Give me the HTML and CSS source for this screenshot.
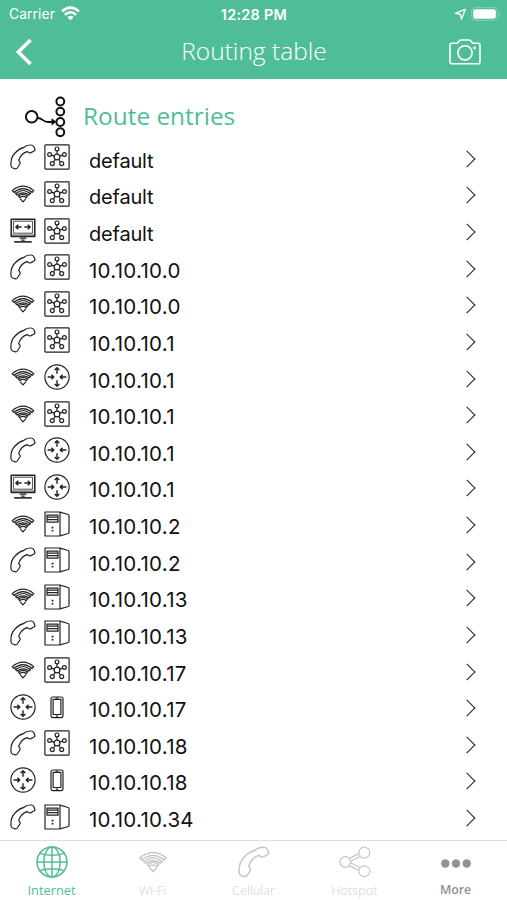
FILE: index.html
```html
<!DOCTYPE html>
<html lang="en">
<head>
<meta charset="utf-8">
<title>Routing table</title>
<link rel="stylesheet" href="styles.css">
</head>
<body>
<svg class="defs" width="0" height="0" aria-hidden="true">
  <symbol id="phone" viewBox="0 0 26 26"><path d="M1 21.5Q.3 14 5 9Q9 4.6 14 3.4L15.5 2.2Q17 1.2 20.5 1Q22.8.9 23.6 2.3L24.8 5Q25.3 6.2 24 7L21 8.6Q19.5 9.3 18.6 8.6L17 7.6Q11 9.5 8.7 16.4L10 18.3Q10.4 19 9.9 20L7.3 24Q6.6 25 5.5 24.8L2.6 24Q1 23.3 1 21.5Z"/></symbol>
  <symbol id="wifi" viewBox="0 0 26 26"><path d="M2.2 9.6Q13 .8 23.8 9.6L22.2 11.3Q13 4 3.8 11.3ZM5.4 11.4Q5 11.9 5.6 12.5L6.9 13.9Q13 9.7 19.1 13.9L20.4 12.5Q21 11.9 20.6 11.4M8.4 14.2Q8.2 14.8 8.6 15.3L9.8 16.6Q13 14.2 16.2 16.6L17.4 15.3Q17.8 14.8 17.6 14.2M10.4 17.3Q10.3 18 10.9 18.6L13 20.8 15.1 18.6Q15.7 18 15.6 17.3M6.2 12.2Q13 6.8 19.8 12.2M8.9 14.7Q13 11.9 17.1 14.7"/></symbol>
  <symbol id="net" viewBox="0 0 26 26"><rect x=".9" y=".9" width="24.2" height="24.2" rx=".7"/><circle cx="13" cy="13" r="2.9"/><circle cx="13" cy="4.9" r="1.9"/><circle cx="5.6" cy="10.5" r="1.9"/><circle cx="20.4" cy="10.5" r="1.9"/><circle cx="8.3" cy="19.6" r="2"/><circle cx="17.7" cy="19.6" r="2"/><path d="M13 6.8V10M7.4 11.1 10.2 12.1M18.6 11.1 15.8 12.1M9.5 18 11.3 15.4M16.5 18 14.7 15.4"/></symbol>
  <symbol id="router" viewBox="0 0 26 26"><circle cx="13" cy="13" r="12.1"/><path d="M13 9.8V4M10.7 6.1 13 3.7 15.3 6.1M13 16.2V22M10.7 19.9 13 22.3 15.3 19.9M3.6 13H9.8M7.4 10.7 9.8 13 7.4 15.3M22.4 13H16.2M18.6 10.7 16.2 13 18.6 15.3" stroke-width="1.4"/></symbol>
  <symbol id="monitor" viewBox="0 0 26 26"><path d="M1.2 1.2H24.8V18.4H1.2Z" stroke-width="1.5"/><path d="M3.4 3.2H22.6V15.2H3.4ZM1.4 17H24.6" stroke-width=".8"/><path d="M11.6 9H5.8M8.3 6.7 5.8 9 8.3 11.3M14.4 9H20.2M17.7 6.7 20.2 9 17.7 11.3" stroke-width="1.4"/><path d="M9.6 20.1H16.4M11.3 22.2H14.7" stroke-width="1.3"/><path d="M4.2 23.9H21.8" stroke-width="1.6"/></symbol>
  <symbol id="server" viewBox="0 0 26 26"><path d="M1 1H16V25H1ZM16 1.2 24.2 3.5Q25 3.8 25 4.6V21.4Q25 22.2 24.2 22.5L16 24.8M3 4.2H14V8.6H3ZM3 8.8V11.2H14V8.8M3 6.1H14"/><path d="M8.5 15.8V17.4M8.5 19V20.6" stroke-width="1.8"/></symbol>
  <symbol id="mobile" viewBox="0 0 26 26"><rect x="7" y="3" width="12" height="20.6" rx="2"/><path d="M9.1 5.3H16.9V20.5H9.1ZM11.6 4H14.4M11.8 22.1H14.2"/></symbol>
</svg>
<div class="app">
  <header class="top">
    <div class="status">
      <div class="carrier"><span>Carrier</span>
        <svg width="19" height="15" viewBox="0 0 19 15" fill="none" stroke="#fff" stroke-width="2.5"><path d="M1 5.4Q9.5-2.1 18 5.4M3.9 8.8Q9.5 3.8 15.1 8.8"/><path d="M6.4 11.2Q9.5 8.4 12.6 11.2L9.5 14.3Z" fill="#fff" stroke="none"/></svg>
      </div>
      <div class="time">12:28 PM</div>
      <div class="indicators">
        <svg width="13" height="13" viewBox="0 0 13 13" fill="none" stroke="#fff" stroke-width="1.3" stroke-linejoin="round"><path d="M1.3 5.4 11.3 1.4 7.4 11.2 6.4 6.4Z"/></svg>
        <svg width="30" height="14" viewBox="0 0 30 14"><rect x=".6" y=".6" width="25.8" height="12.8" rx="4" fill="none" stroke="#85d0b6"/><rect x="2.2" y="2.2" width="22.6" height="9.6" rx="2.3" fill="#fff"/><path d="M28 4.8Q30 7 28 9.2Z" fill="#85d0b6"/></svg>
      </div>
    </div>
    <div class="nav">
      <svg class="back" width="18" height="28" viewBox="0 0 18 28" fill="none" stroke="#fff" stroke-width="3.6"><path d="M15.5 2 3.4 14 15.5 26"/></svg>
      <h1>Routing table</h1>
      <svg class="camera" width="32" height="26" viewBox="0 0 32 26" fill="none" stroke="#fff" stroke-width="1.6" stroke-linejoin="round"><path d="M3 4.3H8.2L10.4 1.7Q11 1 12 1H20Q21 1 21.6 1.7L23.8 4.3H29Q31 4.3 31 6.3V22.7Q31 24.7 29 24.7H3Q1 24.7 1 22.7V6.3Q1 4.3 3 4.3Z"/><circle cx="16" cy="13.8" r="7.1"/><circle cx="25.5" cy="8.9" r="1.3" fill="#fff" stroke="none"/></svg>
    </div>
  </header>
  <main>
    <div class="section">
      <svg width="42" height="42" viewBox="0 0 42 42" fill="none" stroke="#111" stroke-width="2"><circle cx="7.7" cy="21.8" r="5.8"/><circle cx="36.3" cy="6.5" r="3.9"/><circle cx="36.3" cy="16.6" r="3.9"/><circle cx="36.3" cy="27" r="3.9"/><circle cx="36.3" cy="37.2" r="3.9"/><path d="M13.5 23C18.5 22.6 18.5 27 24 27H29" stroke-width="1.8"/><path d="M27.5 23.2 32.5 26.8 27.5 30.4Z" fill="#111" stroke="none"/></svg>
      <h2>Route entries</h2>
    </div>
    <ul class="routes">
      <li><svg><use href="#phone"/></svg><svg><use href="#net"/></svg><span class="name">default</span><i></i></li>
      <li><svg><use href="#wifi"/></svg><svg><use href="#net"/></svg><span class="name">default</span><i></i></li>
      <li><svg><use href="#monitor"/></svg><svg><use href="#net"/></svg><span class="name">default</span><i></i></li>
      <li><svg><use href="#phone"/></svg><svg><use href="#net"/></svg><span>10.10.10.0</span><i></i></li>
      <li><svg><use href="#wifi"/></svg><svg><use href="#net"/></svg><span>10.10.10.0</span><i></i></li>
      <li><svg><use href="#phone"/></svg><svg><use href="#net"/></svg><span>10.10.10.1</span><i></i></li>
      <li><svg><use href="#wifi"/></svg><svg><use href="#router"/></svg><span>10.10.10.1</span><i></i></li>
      <li><svg><use href="#wifi"/></svg><svg><use href="#net"/></svg><span>10.10.10.1</span><i></i></li>
      <li><svg><use href="#phone"/></svg><svg><use href="#router"/></svg><span>10.10.10.1</span><i></i></li>
      <li><svg><use href="#monitor"/></svg><svg><use href="#router"/></svg><span>10.10.10.1</span><i></i></li>
      <li><svg><use href="#wifi"/></svg><svg><use href="#server"/></svg><span>10.10.10.2</span><i></i></li>
      <li><svg><use href="#phone"/></svg><svg><use href="#server"/></svg><span>10.10.10.2</span><i></i></li>
      <li><svg><use href="#wifi"/></svg><svg><use href="#server"/></svg><span>10.10.10.13</span><i></i></li>
      <li><svg><use href="#phone"/></svg><svg><use href="#server"/></svg><span>10.10.10.13</span><i></i></li>
      <li><svg><use href="#wifi"/></svg><svg><use href="#net"/></svg><span>10.10.10.17</span><i></i></li>
      <li><svg><use href="#router"/></svg><svg><use href="#mobile"/></svg><span>10.10.10.17</span><i></i></li>
      <li><svg><use href="#phone"/></svg><svg><use href="#net"/></svg><span>10.10.10.18</span><i></i></li>
      <li><svg><use href="#router"/></svg><svg><use href="#mobile"/></svg><span>10.10.10.18</span><i></i></li>
      <li><svg><use href="#phone"/></svg><svg><use href="#server"/></svg><span>10.10.10.34</span><i></i></li>
    </ul>
  </main>
  <nav class="tabs">
    <a class="active"><svg viewBox="0 0 32 32"><circle cx="16" cy="16" r="15"/><ellipse cx="16" cy="16" rx="8.2" ry="15"/><path d="M16 1V31M1 16H31M3.6 7.4Q16 11.2 28.4 7.4M3.6 24.6Q16 20.8 28.4 24.6"/></svg><span>Internet</span></a>
    <a><svg viewBox="0 0 32 32"><use href="#wifi"/></svg><span>Wi-Fi</span></a>
    <a><svg viewBox="0 0 32 32"><use href="#phone"/></svg><span>Cellular</span></a>
    <a><svg viewBox="0 0 32 32"><circle cx="6.3" cy="16" r="5.3"/><circle cx="25.3" cy="6.7" r="5.5"/><circle cx="25.3" cy="25.3" r="5.5"/><path d="M10.3 12.4 19.7 7.6M11.6 15.2 21 10.5M10.3 19.6 19.7 24.4M11.6 16.8 21 21.5"/></svg><span>Hotspot</span></a>
    <a class="more"><svg viewBox="0 0 32 32"><circle cx="5.3" cy="17.5" r="4.2"/><circle cx="16" cy="17.5" r="4.2"/><circle cx="26.7" cy="17.5" r="4.2"/></svg><span>More</span></a>
  </nav>
</div>
</body>
</html>
```
FILE: styles.css
```css
* { box-sizing: border-box; }
body { margin: 0; background: #fff; font-family: Inter, "Liberation Sans", sans-serif; }
.defs { display: block; width: 0; height: 0; }
.app { width: 507px; height: 900px; display: flex; flex-direction: column; overflow: hidden; }

.top { height: 79px; flex: none; background: #4fbd97; color: #fff; }
.status { height: 28px; display: grid; grid-template-columns: 1fr auto 1fr; align-items: center; padding: 0 8px 0 9px; font-size: 13.8px; }
.carrier { display: flex; align-items: center; gap: 6px; letter-spacing: .1px; }
.carrier svg { margin-top: -1px; }
.time { font-size: 14.4px; font-weight: 600; letter-spacing: .3px; }
.indicators { display: flex; justify-content: flex-end; align-items: center; gap: 4px; margin-right: -2px; }
.nav { height: 48px; display: flex; align-items: center; justify-content: space-between; padding: 0 26px 0 15px; }
.nav h1 { margin: -3px 0 0 26px; font: 300 24.5px/34px "Open Sans", sans-serif; }

main { flex: 1; min-height: 0; }
.section { height: 60px; display: flex; align-items: center; gap: 17px; padding: 13px 0 0 24px; }
.section svg { flex: none; }
.section h2 { margin: 1px 0 0; font: 400 24.4px/34px "Open Sans", sans-serif; color: #4fbd97; }
.routes { list-style: none; margin: 0; padding: 0; }
.routes li { height: 36.64px; display: flex; align-items: center; gap: 8px; padding: 0 33px 0 10px; }
.routes svg { width: 26px; height: 26px; flex: none; fill: none; stroke: #222; stroke-width: 1.2; stroke-linejoin: round; }
.routes span { flex: 1; margin: 7px 0 0 11px; font-size: 20.5px; line-height: 24px; letter-spacing: .28px; color: #111; }
.routes .name { font-size: 20px; letter-spacing: -.2px; }
.routes i { width: 12px; height: 12px; margin: 3px 1px 0 0; border: solid #222; border-width: 1.6px 1.6px 0 0; transform: rotate(45deg); }

.tabs { height: 60px; flex: none; display: flex; border-top: 1px solid #dedede; background: #fff; color: #d2d2d2; padding: 0 1px; }
.tabs a { flex: 1; display: flex; flex-direction: column; align-items: center; padding-top: 5px; }
.tabs svg { width: 32px; height: 32px; fill: none; stroke: #c6c6c6; stroke-width: 1.2; stroke-linejoin: round; }
.tabs span { margin-top: 3px; font: 300 12.8px/18px "Open Sans", sans-serif; }
.tabs .active { color: #4fbd97; }
.tabs .active svg { stroke: #4fbd97; stroke-width: 1.5; }
.tabs .active span { font-weight: 400; }
.tabs .more { color: #8e8e8e; }
.tabs .more svg { fill: #929292; stroke: none; }
.tabs .more span { font-size: 12.3px; font-weight: 600; }
```
